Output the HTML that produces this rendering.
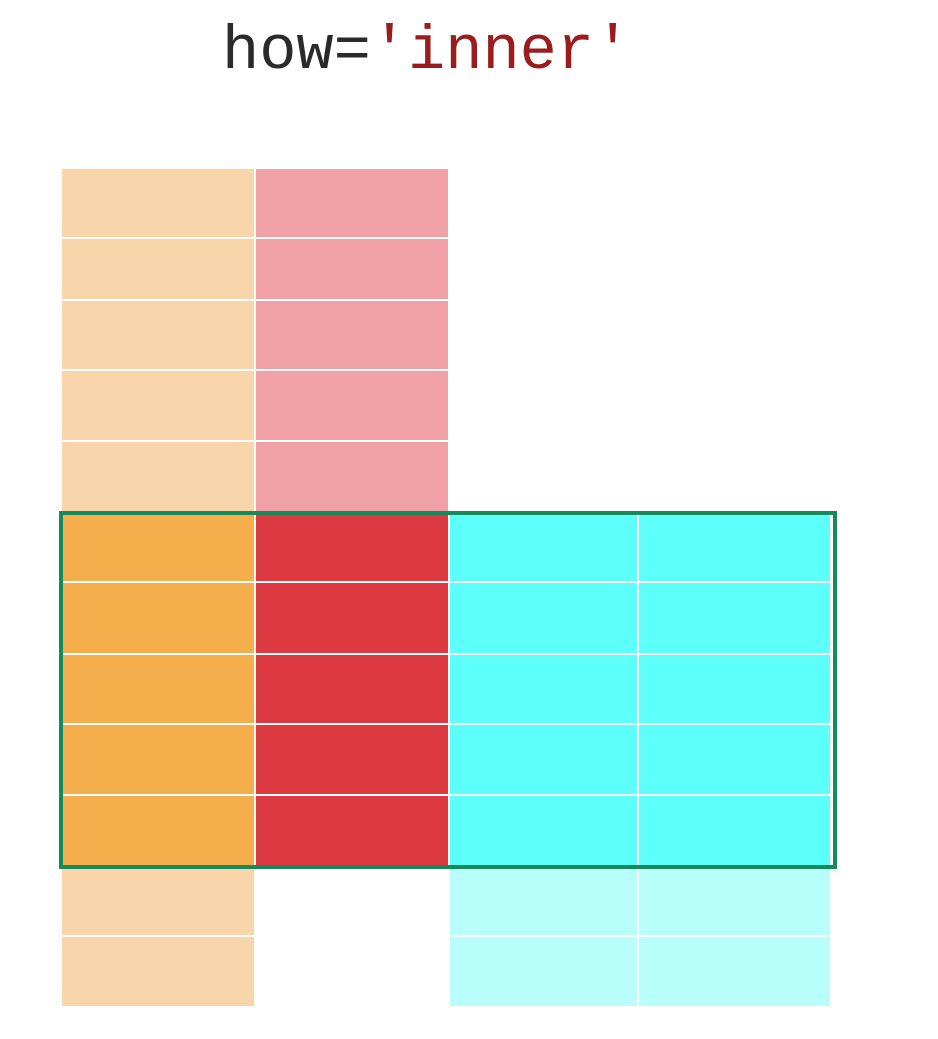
<!DOCTYPE html>
<html><head><style>
html,body{margin:0;padding:0;background:#fff;width:938px;height:1039px;overflow:hidden;position:relative}
.t{position:absolute;left:222px;top:16px;font-family:"Liberation Mono",monospace;font-size:62px;line-height:72px;color:#2a2a2a;white-space:pre}
.t span{color:#9b1c1c}
.r{position:absolute}
.h{position:absolute;height:2px;background:#fff}
.v{position:absolute;width:2px;background:#fff}
.box{position:absolute;left:59px;top:511px;width:770px;height:350px;border:4px solid #168a5a;box-sizing:content-box}
</style></head><body>
<div class="t">how=<span>'inner'</span></div>
<div class="r" style="left:62px;top:169px;width:192px;height:343px;background:#f8d5aa"></div>
<div class="r" style="left:256px;top:169px;width:192px;height:343px;background:#efa1a5"></div>
<div class="r" style="left:62px;top:512px;width:192px;height:354px;background:#f4ae4c"></div>
<div class="r" style="left:256px;top:512px;width:192px;height:354px;background:#dc3a40"></div>
<div class="r" style="left:450px;top:512px;width:380px;height:354px;background:#5cfffa"></div>
<div class="r" style="left:62px;top:866px;width:192px;height:140px;background:#f8d5aa"></div>
<div class="r" style="left:450px;top:866px;width:380px;height:140px;background:#b8fffb"></div>
<div class="h" style="left:62px;top:237px;width:386px"></div>
<div class="h" style="left:62px;top:299px;width:386px"></div>
<div class="h" style="left:62px;top:369px;width:386px"></div>
<div class="h" style="left:62px;top:440px;width:386px"></div>
<div class="h" style="left:62px;top:581px;width:768px"></div>
<div class="h" style="left:62px;top:653px;width:768px"></div>
<div class="h" style="left:62px;top:723px;width:768px"></div>
<div class="h" style="left:62px;top:794px;width:768px"></div>
<div class="h" style="left:62px;top:935px;width:192px"></div>
<div class="h" style="left:450px;top:935px;width:380px"></div>
<div class="v" style="left:637px;top:512px;height:494px"></div>
<div class="box"></div>
</body></html>
